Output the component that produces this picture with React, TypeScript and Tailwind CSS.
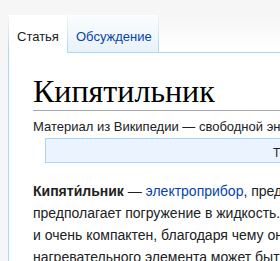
export default function App() {
  return (
    <div className="w-[280px] h-[261px] overflow-hidden bg-[#f6f6f6] font-['Liberation_Sans',Arial,sans-serif] text-[#202122]">
      {/* Tabs */}
      <div className="flex h-[53px] pt-[15px] pl-[8px]">
        <div className="w-px bg-gradient-to-b from-[#a7d7f9]/0 to-[#a7d7f9]" />
        <div className="w-[58px] bg-white pl-[8px] pt-[14px] text-[13px] leading-[16px]">Статья</div>
        <div className="w-px bg-gradient-to-b from-[#a7d7f9]/0 to-[#a7d7f9]" />
        <div className="w-[90px] border-b border-[#a7d7f9] bg-gradient-to-b from-[#fbfdff] to-[#e8f2f8] pl-[8px] pt-[14px] text-[13px] leading-[16px] text-[#0645ad]">
          Обсуждение
        </div>
        <div className="w-px bg-gradient-to-b from-[#a7d7f9]/0 to-[#a7d7f9]" />
        <div className="flex-1 border-b border-[#a7d7f9] bg-gradient-to-b from-[#f6f6f6] to-white" />
      </div>

      {/* Content */}
      <div className="ml-[8px] h-[208px] border-l border-[#a7d7f9] bg-white pl-[24px]">
        <h1 className="w-[400px] pt-[19px] border-b border-[#a2a9b1] font-['Liberation_Serif','Times_New_Roman',serif] text-[32px] leading-[38px] text-black">
          Кипятильник
        </h1>
        <div className="mt-[7px] whitespace-nowrap text-[13px] leading-[18px]">
          Материал из Википедии — свободной энциклопедии
        </div>
        <div className="ml-[12px] mt-[2px] w-[600px] border border-[#a7d7f9] bg-[#eaf3ff] pl-[227px] pt-[6px] pb-[1px] whitespace-nowrap text-[12px] leading-[16px]">
          Текущая версия страницы пока не проверялась опытными участниками
        </div>
        <p className="mt-[17px] whitespace-nowrap text-[14px] leading-[22px]">
          <b>Кипяти́льник</b> — <span className="text-[#0645ad]">электроприбор</span>, предназначенный для нагревания воды
          <br />
          предполагает погружение в жидкость. Кипятильник прост в изготовлении
          <br />
          и очень компактен, благодаря чему он удобен в поездках
          <br />
          нагревательного элемента может быть использован
        </p>
      </div>
    </div>
  );
}
